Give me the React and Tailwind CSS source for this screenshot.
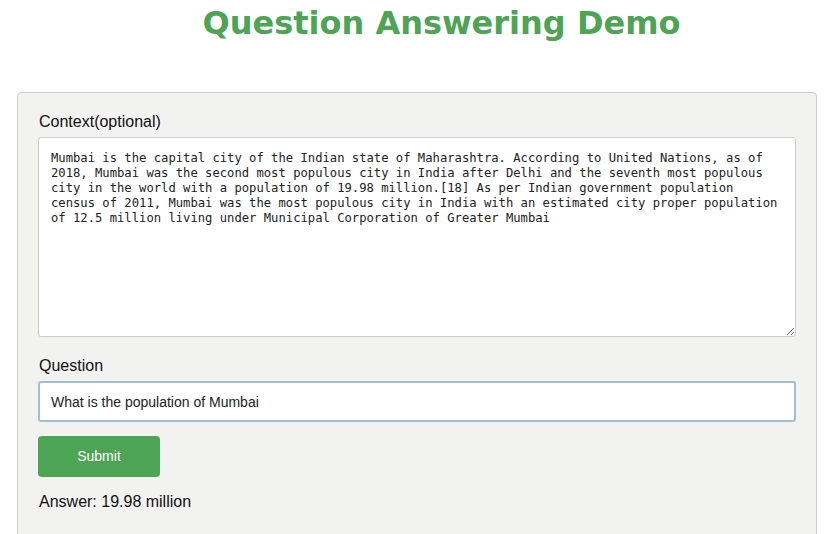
export default function App() {
  const context =
    "Mumbai is the capital city of the Indian state of Maharashtra. According to United Nations, as of 2018, Mumbai was the second most populous city in India after Delhi and the seventh most populous city in the world with a population of 19.98 million.[18] As per Indian government population census of 2011, Mumbai was the most populous city in India with an estimated city proper population of 12.5 million living under Municipal Corporation of Greater Mumbai";

  return (
    <div className="w-[837px] h-[534px] overflow-hidden bg-white font-['Liberation_Sans',Arial,sans-serif]">
      <h1 className="pl-[46px] pt-[1px] h-[92px] text-center text-[32px] font-bold leading-[44px] text-[#4ca454] font-['DejaVu_Sans',Verdana,sans-serif]">
        Question Answering Demo
      </h1>
      <div className="ml-[17px] w-[800px] h-[460px] rounded-[4px] border border-[#cfcfcf] bg-[#f2f2f1] px-[20px] pt-[19px]">
        <label className="block pl-[1px] text-[16px] leading-[20px] text-[#111]">Context(optional)</label>
        <textarea
          className="mt-[5px] block w-[758px] h-[200px] resize-y rounded-[3px] border border-[#cccccc] bg-white px-[12px] pt-[13px] pb-[12px] text-[12.2px] leading-[15px] text-[#222] font-['DejaVu_Sans_Mono',Consolas,monospace] outline-none"
          defaultValue={context}
        />
        <label className="mt-[19px] block pl-[1px] text-[16px] leading-[20px] text-[#111]">Question</label>
        <input
          className="mt-[5px] block w-[758px] h-[41px] rounded-[3px] border-2 border-[#a3bdd3] bg-white px-[11px] text-[14px] text-[#222] outline-none"
          defaultValue="What is the population of Mumbai"
        />
        <button className="mt-[14px] block w-[122px] h-[41px] rounded-[4px] bg-[#4ca454] text-[14px] text-white">
          Submit
        </button>
        <p className="mt-[15px] pl-[1px] text-[16px] leading-[20px] text-[#111]">Answer: 19.98 million</p>
      </div>
    </div>
  );
}
